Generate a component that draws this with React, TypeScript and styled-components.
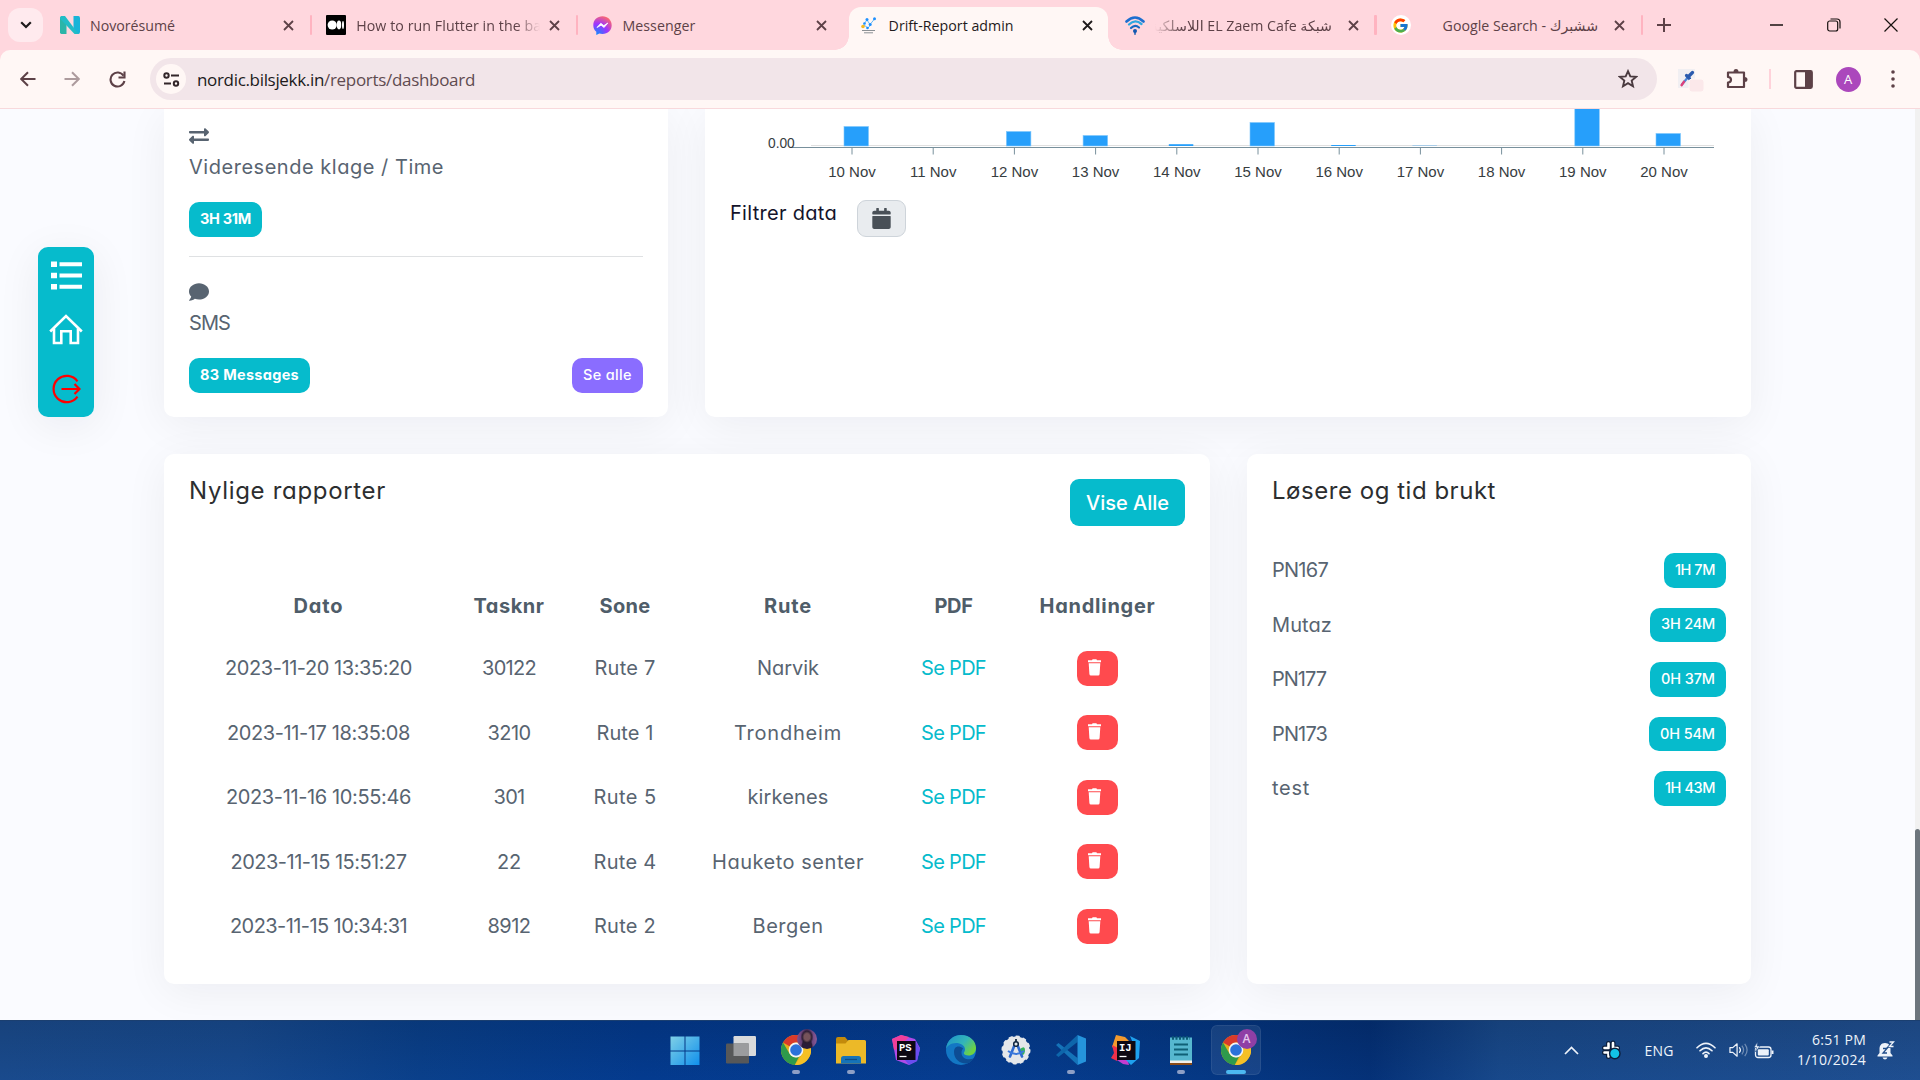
import React, { useLayoutEffect, useRef, useState } from "react";
import styled, { createGlobalStyle, css } from "styled-components";
import { FaExchangeAlt, FaComment, FaCalendar } from "react-icons/fa";
import { FcGoogle } from "react-icons/fc";

const ui = `"Open Sans", "Noto Sans", "DejaVu Sans", sans-serif`;
const body = `Inter, "Open Sans", sans-serif`;
const teal = "#06bbcc";
const ink = "#586471";

const Global = createGlobalStyle`
  *, *::before, *::after { box-sizing: border-box; }
  body { margin: 0; background: #fafbff; overflow: hidden; }
  svg { display: block; flex: none; }
`;

const Screen = styled.div`
  width: 1920px;
  height: 1080px;
  display: flex;
  flex-direction: column;
  overflow: hidden;
  font-family: ${ui};
`;

/* ---------- text that tracks itself to a set width ---------- */

const FitSpan = styled.span`
  display: inline-block;
  white-space: nowrap;
`;

function Fit({ w, children }: { w: number; children: string }) {
  const ref = useRef<HTMLSpanElement>(null);
  const [spacing, setSpacing] = useState(0);
  useLayoutEffect(() => {
    if (!ref.current) return;
    const natural = ref.current.getBoundingClientRect().width;
    setSpacing((w - natural) / children.length);
  }, [w, children]);
  return (
    <FitSpan ref={ref} style={{ letterSpacing: spacing }}>
      {children}
    </FitSpan>
  );
}

/* ---------- browser: tab strip ---------- */

const TabStrip = styled.div`
  height: 50px;
  flex: none;
  display: flex;
  background: #ffd7de;
  color: #5d4147;
`;

const TabSearch = styled.div`
  width: 35px;
  height: 34px;
  margin: 8px 3px 0 8px;
  border-radius: 12px;
  background: #ffeaee;
  color: #1f1a1b;
  display: grid;
  place-items: center;
`;

const Tab = styled.div<{ $active?: boolean; $line?: boolean }>`
  position: relative;
  width: 266.2px;
  height: 50px;
  padding: 0 18px 0 14px;
  display: flex;
  align-items: center;
  ${(p) =>
    p.$line &&
    css`
      &::after {
        content: "";
        position: absolute;
        right: 0;
        top: 15px;
        width: 2.5px;
        height: 20px;
        border-radius: 1px;
        background: #ffb3c0;
      }
    `}
  ${(p) =>
    p.$active &&
    css`
      color: #1f1a1b;
      &::before {
        content: "";
        position: absolute;
        inset: 7px 3px 0 4px;
        border-radius: 12px 12px 0 0;
        background: #fff7f5;
      }
    `}
`;

const Flare = styled.i<{ $right?: boolean }>`
  position: absolute;
  bottom: 0;
  ${(p) => (p.$right ? "right: -11px;" : "left: -10px;")}
  width: 14px;
  height: 14px;
  background: radial-gradient(
    circle at ${(p) => (p.$right ? "100%" : "0")} 0,
    transparent 13.5px,
    #fff7f5 14px
  );
`;

const Favicon = styled.div`
  position: relative;
  width: 20px;
  height: 20px;
  flex: none;
  display: grid;
  place-items: center;
`;

const TabTitle = styled.div<{ $fade?: "left" | "right"; $rtl?: boolean }>`
  position: relative;
  flex: 1;
  margin: 1px ${(p) => (p.$rtl ? 16 : 9)}px 0 10px;
  overflow: hidden;
  white-space: nowrap;
  font-size: 14.2px;
  line-height: 26px;
  letter-spacing: ${(p) => (p.$rtl ? 0 : -0.12)}px;
  ${(p) =>
    p.$fade === "right" &&
    "mask-image: linear-gradient(to left, transparent, #000 24px);"}
  ${(p) =>
    p.$fade === "left" &&
    "mask-image: linear-gradient(to right, transparent, #000 28px);"}
`;

const TabClose = styled.div`
  position: relative;
  width: 11px;
  height: 11px;
`;

const NewTab = styled.div`
  width: 42px;
  height: 50px;
  display: grid;
  place-items: center;
`;

const WindowButtons = styled.div`
  flex: 1;
  padding-right: 1px;
  display: flex;
  justify-content: flex-end;
  color: #17110f;
`;

const WindowButton = styled.div`
  width: 57px;
  height: 49px;
  display: grid;
  place-items: center;
`;

/* ---------- browser: toolbar ---------- */

const ToolbarBack = styled.div`
  flex: none;
  background: #ffd7de;
`;

const Toolbar = styled.div`
  height: 59px;
  display: flex;
  align-items: center;
  padding: 0 0 0 6px;
  background: #fff7f5;
  border-bottom: 1px solid #f8d9dc;
  border-radius: 10px 10px 0 0;
  color: #5d4147;
`;

const ToolButton = styled.div<{ $w?: number; $dim?: boolean }>`
  width: ${(p) => p.$w ?? 44}px;
  height: 42px;
  flex: none;
  display: grid;
  place-items: center;
  opacity: ${(p) => (p.$dim ? 0.5 : 1)};
`;

const Omnibox = styled.div`
  width: 1507px;
  height: 42px;
  flex: none;
  margin-left: 9px;
  padding: 0 19px 0 6px;
  display: flex;
  align-items: center;
  border-radius: 21px;
  background: #f2e5e9;
`;

const SiteInfo = styled.div`
  width: 30px;
  height: 30px;
  border-radius: 50%;
  background: #fff7f5;
  color: #33262a;
  display: grid;
  place-items: center;
`;

const Url = styled.div`
  flex: 1;
  margin-left: 11px;
  padding-top: 1px;
  font-size: 17px;
  line-height: 30px;
  color: #5f4b50;
  b {
    font-weight: 400;
    color: #201a1b;
  }
`;

const ToolDivider = styled.div`
  width: 2px;
  height: 20px;
  background: #ffd2da;
`;

const Avatar = styled.div`
  width: 25px;
  height: 25px;
  border-radius: 50%;
  background: #ab47bc;
  color: #fff;
  font-size: 13px;
  line-height: 25px;
  text-align: center;
`;

/* ---------- page ---------- */

const Page = styled.div`
  height: 911px;
  flex: none;
  display: flex;
  overflow: hidden;
  background: #fafbff;
  font-family: ${body};
  font-feature-settings: "cv11";
  font-size: 20px;
  line-height: 30px;
  color: ${ink};
`;

const SideColumn = styled.div`
  width: 164px;
  flex: none;
  padding: 138px 0 0 38px;
`;

const SideMenu = styled.nav`
  width: 56px;
  height: 170px;
  padding: 14px 0 13px;
  display: flex;
  flex-direction: column;
  align-items: center;
  gap: 24px;
  border-radius: 10px;
  background: ${teal};
  box-shadow: 0 8px 44px rgba(8, 10, 40, 0.07);
  svg:last-child {
    margin-top: 5px;
  }
`;

const Main = styled.main`
  width: 1587px;
  display: flex;
  flex-direction: column;
  gap: 37px;
`;

const CardRow = styled.div<{ $cols: string; $h: number }>`
  display: grid;
  grid-template-columns: ${(p) => p.$cols};
  gap: 37px;
  height: ${(p) => p.$h}px;
`;

const Card = styled.section<{ $clipped?: boolean }>`
  padding: ${(p) => (p.$clipped ? "0 25px" : "25px 25px 0")};
  border-radius: ${(p) => (p.$clipped ? "0 0 10px 10px" : "10px")};
  background: #fff;
  box-shadow: 0 8px 44px rgba(8, 10, 40, 0.06);
`;

const StatIcon = styled.div<{ $top: number }>`
  padding-top: ${(p) => p.$top}px;
  height: ${(p) => p.$top + 26}px;
`;

const StatName = styled.div`
  height: 30px;
`;

const StatFoot = styled.div`
  height: 34.5px;
  margin-top: 20px;
  display: flex;
  justify-content: space-between;
`;

const Badge = styled.span<{ $color?: string; $bold?: boolean }>`
  height: 34.5px;
  padding: 0 11px 1px;
  display: inline-flex;
  align-items: center;
  border-radius: 10px;
  background: ${(p) => p.$color ?? teal};
  color: #fff;
  font-size: 14.5px;
  font-weight: ${(p) => (p.$bold ? 700 : 500)};
`;

const Rule = styled.hr`
  margin: 19.5px 0 0;
  border: 0;
  border-top: 1px solid #dfe1e3;
`;

const ChartArea = styled.div`
  height: 91px;
  margin: 0 -25px;
  svg text {
    font-family: "Liberation Sans", Arial, sans-serif;
    fill: #373d3f;
  }
`;

const FilterRow = styled.div`
  display: flex;
  align-items: flex-start;
  gap: 20px;
  color: #14142b;
`;

const FilterLabel = styled.div`
  margin-top: -2px;
`;

const DateButton = styled.button`
  width: 49px;
  height: 37px;
  padding: 0;
  display: grid;
  place-items: center;
  border: 1px solid #ced4da;
  border-radius: 9px;
  background: #e9ecef;
  color: #495057;
`;

const CardHead = styled.header<{ $h: number }>`
  height: ${(p) => p.$h}px;
  display: flex;
  justify-content: space-between;
  align-items: flex-start;
`;

const Title = styled.h2`
  margin: -3px 0 0;
  font-size: 24px;
  font-weight: 400;
  line-height: 30px;
  color: #2c2e30;
`;

const PrimaryButton = styled.button`
  height: 47px;
  width: 115px;
  padding: 0;
  border: 0;
  border-radius: 9px;
  background: ${teal};
  color: #fff;
  font: 500 20px ${body};
  font-feature-settings: "cv11";
`;

const TableRow = styled.div<{ $head?: boolean }>`
  display: grid;
  grid-template-columns: 259px 122px 110px 216px 115px 173px;
  height: 64.5px;
  align-items: center;
  justify-items: center;
  ${(p) =>
    p.$head &&
    css`
      height: 60px;
      font-weight: 700;
      color: #4f5d69;
    `}
`;

const PdfLink = styled.span`
  color: ${teal};
`;

const DeleteButton = styled.button`
  width: 41px;
  height: 35px;
  padding: 0 6px 2px 0;
  display: grid;
  place-items: center;
  border: 0;
  border-radius: 10px;
  background: #ff4a4e;
`;

const SolverRow = styled.div`
  height: 54.6px;
  display: flex;
  justify-content: space-between;
  align-items: flex-start;
`;

const SolverName = styled.div`
  padding-top: 2px;
`;

const ScrollSide = styled.div`
  margin-left: auto;
  width: 5px;
  display: flex;
  align-items: flex-end;
  background: #f1f1f1;
`;

const ScrollThumb = styled.div`
  width: 5px;
  height: 191px;
  border-radius: 3px 3px 0 0;
  background: #6c757d;
`;

/* ---------- taskbar ---------- */

const Taskbar = styled.footer`
  height: 60px;
  flex: none;
  display: flex;
  border-top: 1px solid #1b3f70;
  background: linear-gradient(rgba(0, 20, 60, 0.16), rgba(10, 70, 170, 0.14)),
    linear-gradient(
      90deg,
      #1c4b88 0,
      #194a8a 240px,
      #0a3f86 420px,
      #03398a 640px,
      #053b8c 960px,
      #04367f 1200px,
      #042e70 1370px,
      #1a4986 1500px,
      #22508d 1920px
    );
  color: #eef3fa;
`;

const Apps = styled.div`
  margin-left: 658px;
  display: flex;
`;

const AppSlot = styled.div`
  width: 55px;
  height: 59px;
  padding-top: 4px;
`;

const AppTile = styled.div<{ $active?: boolean }>`
  position: relative;
  width: 50px;
  height: 50px;
  margin: 0 auto;
  padding-top: 10px;
  display: flex;
  flex-direction: column;
  align-items: center;
  border-radius: 6px;
  ${(p) =>
    p.$active &&
    "background: rgba(255,255,255,.08); box-shadow: inset 0 0 0 1px rgba(255,255,255,.07);"}
`;

const RunMark = styled.i<{ $active?: boolean }>`
  width: ${(p) => (p.$active ? 20 : 8)}px;
  height: 4px;
  margin-top: 5px;
  border-radius: 2px;
  background: ${(p) => (p.$active ? "#4cb8f0" : "#8d9fc6")};
`;

const Profile = styled.span<{ $photo?: boolean }>`
  position: absolute;
  left: 26px;
  top: 4px;
  width: 20px;
  height: 20px;
  border-radius: 50%;
  background: ${(p) =>
    p.$photo
      ? "radial-gradient(ellipse at 50% 40%, #76535a 0 20%, rgba(42,28,48,.9) 34%, transparent 46%), radial-gradient(ellipse at 50% 100%, #2a1c38 0 36%, transparent 44%), linear-gradient(90deg, #80508e, #4a3060 50%, #8d5c9a)"
      : "#8f3fa5"};
  color: #e5c6ec;
  font: 600 12px/20px ${ui};
  text-align: center;
`;

const Tray = styled.div`
  margin-left: auto;
  width: 365px;
  padding-bottom: 1px;
  display: flex;
  align-items: center;
  font-size: 14px;
`;

const TrayItem = styled.div<{ $w: number }>`
  width: ${(p) => p.$w}px;
  flex: none;
  display: grid;
  place-items: center;
`;

const Clock = styled.div`
  width: 80px;
  text-align: right;
  line-height: 20px;
  font-size: 14px;
`;

/* ---------- small icons ---------- */

const Cross = () => (
  <svg width="11" height="11" viewBox="0 0 11 11" stroke="currentColor" strokeWidth="1.8">
    <path d="M1 1l9 9M10 1l-9 9" />
  </svg>
);

const NovoIcon = () => (
  <svg width="20" height="18" viewBox="0 0 20 18">
    <path d="M0 2.2Q0 .3 1.8.3H3L6.500 3v15H1.500Q0 18 0 16.300z" fill="#2bb5a8" />
    <path d="M20 2Q20 0 18.300 0H13.500v15l3.500 3h1.300Q20 18 20 16z" fill="#19b4d8" />
    <path d="M1.300 0H5L18.500 18H14.500L0 2.500Q0 .5 1.300 0z" fill="#22bcc6" />
  </svg>
);

const MediumIcon = () => (
  <svg width="20" height="20" viewBox="0 0 20 20">
    <rect width="20" height="20" rx="1" fill="#000" />
    <circle cx="6.200" cy="10" r="4.600" fill="#fff" />
    <ellipse cx="13" cy="10" rx="2.200" ry="4.400" fill="#fff" />
    <ellipse cx="17" cy="10" rx="1" ry="4" fill="#fff" />
  </svg>
);

const MessengerIcon = () => (
  <svg width="19" height="19" viewBox="0 0 19 19">
    <defs>
      <radialGradient id="msg" cx=".2" cy="1" r="1.100">
        <stop offset="0" stopColor="#0a8dff" />
        <stop offset=".55" stopColor="#a033ff" />
        <stop offset="1" stopColor="#ff6a6a" />
      </radialGradient>
    </defs>
    <path d="M9.500.3C4.200.3.3 4 .3 9.200c0 2.700 1.100 5 3 6.600V19l3-1.500c1 .3 2 .4 3.200.4 5.300 0 9.200-3.700 9.200-8.700S14.800.3 9.500.3z" fill="url(#msg)" />
    <path d="M4 11.500l3.800-4.200 3 2.300 4-2.600-3.700 4.500-3-2.300z" fill="#fff" stroke="#fff" strokeWidth=".8" strokeLinejoin="round" />
  </svg>
);

const DriftIcon = () => (
  <svg width="15" height="17" viewBox="0 0 15 17">
    <path d="M2.500 7.500L6 3l3 4.500L13.500 2M3 8l4 3 2.500-3" stroke="#64b9f5" strokeWidth="1" fill="none" />
    <g fill="#1e90ff">
      <circle cx="6" cy="2.500" r="1.500" /><circle cx="9.200" cy="7.500" r="1.500" /><circle cx="13.500" cy="1.800" r="1.500" />
      <circle cx="3.500" cy="6.500" r="1.300" /><circle cx="6.500" cy="11" r="1.300" />
    </g>
    <circle cx="2" cy="9.500" r="1.800" fill="#f5b921" />
    <path d="M1 13.500h13M3 15.800h9" stroke="#8b9094" strokeWidth="1" />
  </svg>
);

const WifiFav = () => (
  <svg width="20" height="19" viewBox="0 0 20 19" fill="none" strokeLinecap="round">
    <path d="M1.500 5.500Q10-2.500 18.500 5.500" stroke="#1d6fd0" strokeWidth="2.600" />
    <path d="M4 8.500Q10 2.500 16.500 8" stroke="#2fa8e0" strokeWidth="2.300" />
    <path d="M6 12Q10 8 14 11.500" stroke="#1669c2" strokeWidth="2.200" />
    <circle cx="10" cy="15" r="2" fill="#1458b0" /><path d="M10 16v2.200" stroke="#1458b0" strokeWidth="1.500" />
  </svg>
);

const GoogleFav = styled.div`
  width: 20px;
  height: 20px;
  border-radius: 50%;
  background: #fff;
  display: grid;
  place-items: center;
`;

const ListIcon = () => (
  <svg width="31" height="29" viewBox="0 0 31 29" fill="#fff">
    <path d="M0 .5h6v5.500H0zM0 11.800h6v5.500H0zM0 23h6v5.500H0zM8.500 1.200H31v4H8.500zM8.500 12.500H31v4H8.500zM8.500 23.700H31v4H8.500z" />
  </svg>
);

const HomeIcon = () => (
  <svg width="34" height="31" viewBox="0 0 34 31" fill="none" stroke="#fff" strokeWidth="2.600" strokeLinejoin="miter">
    <path d="M1.200 17.500L17 2l15.800 15.500" />
    <path d="M5 14.500V29h7.300V17.200h9.400V29H29V14.500" />
  </svg>
);

const LogoutIcon = () => (
  <svg width="30" height="30" viewBox="0 0 30 30" fill="none" stroke="#f00" strokeWidth="2.200">
    <path d="M26.500 7.300A13.200 13.200 0 1 0 26.500 22.700" />
    <path d="M10.500 15H28M23.500 10l5 5-5 5" />
  </svg>
);

const TrashIcon = () => (
  <svg width="15" height="17" viewBox="0 0 15 17" fill="#fff">
    <path d="M5 1.200L5.600.3h3.800l.6.900h4v2H1v-2zM1.700 4.300h11.600l-.7 10.700q-.1 1.500-1.500 1.500H3.900q-1.400 0-1.500-1.500z" />
  </svg>
);

/* ---------- taskbar icons ---------- */

const WindowsIcon = () => (
  <svg width="32" height="30" viewBox="0 0 32 30">
    <defs>
      <linearGradient id="win" x1="0" y1="0" x2="1" y2="1">
        <stop offset="0" stopColor="#7fd0e6" /><stop offset="1" stopColor="#0f8fec" />
      </linearGradient>
    </defs>
    <path d="M.5 1.500h14v14H.5zM15.500 1.500h14v14h-14zM.5 16.500h14v14H.5zM15.500 16.500h14v14h-14z" fill="url(#win)" />
  </svg>
);

const TaskViewIcon = () => (
  <svg width="30" height="30" viewBox="0 0 30 30">
    <rect x="7.500" y="1" width="22.500" height="20" rx="1.200" fill="#d9dadb" />
    <rect x="0" y="8.500" width="23" height="20" rx="1.200" fill="#575859" />
    <path d="M7.500 8.500H23V21H7.500z" fill="#9b9c9e" />
  </svg>
);

const ChromeIcon = () => (
  <svg width="30" height="30" viewBox="0 0 30 30">
    <circle cx="15" cy="15" r="15" fill="#e2b01c" />
    <path d="M2 7.500A15 15 0 0 1 28 7.500H15a7.500 7.500 0 0 0-6.500 3.800z" fill="#d93a2b" />
    <path d="M2 7.500L8.500 18.700A7.500 7.500 0 0 0 18 21.800L13.700 30A15 15 0 0 1 2 7.500z" fill="#2e9a4c" />
    <path d="M28 7.500A15 15 0 0 1 14 30L21.500 18.700A7.500 7.500 0 0 0 15 7.500z" fill="#f5c026" />
    <circle cx="15" cy="15" r="7.400" fill="#f3f4f6" />
    <circle cx="15" cy="15" r="5.800" fill="#2c72da" />
  </svg>
);

const FolderIcon = () => (
  <svg width="30" height="30" viewBox="0 0 30 30">
    <path d="M0 4q0-2 2-2h7l3 3.500V10H0z" fill="#c38a0b" />
    <path d="M0 8.500h9.500l3-3.500H28.500q1.500 0 1.500 1.500V28.500H0z" fill="#ecb928" />
    <path d="M5 28.500v-5q0-2.500 2.500-2.500h15q2.500 0 2.500 2.500v5z" fill="#1673b8" />
    <path d="M9 24.500h12" stroke="#0c4c86" strokeWidth="1.200" />
  </svg>
);

const JetBrainsIcon = ({ label, shapes }: { label: string; shapes: [string, string][] }) => (
  <svg width="30" height="30" viewBox="0 0 30 30">
    {shapes.map(([d, fill]) => (
      <path key={d} d={d} fill={fill} />
    ))}
    <rect x="6" y="6" width="18.500" height="19" fill="#0d0813" />
    <text x="8" y="15.500" fill="#fff" fontFamily="Liberation Mono, monospace" fontWeight="700" fontSize="10.500">
      {label}
    </text>
    <path d="M8.500 21.500h7" stroke="#fff" strokeWidth="1.300" />
  </svg>
);

const EdgeIcon = () => (
  <svg width="30" height="30" viewBox="0 0 30 30">
    <defs>
      <linearGradient id="edgeTop" x1="0" y1="0" x2="1" y2=".6">
        <stop offset="0" stopColor="#1d90cc" /><stop offset=".6" stopColor="#33b5b8" /><stop offset="1" stopColor="#6fd23f" />
      </linearGradient>
    </defs>
    <circle cx="15" cy="15" r="15" fill="#1377c4" />
    <path d="M8 17c0 8 7 12 13 11.500 3-.6 5.500-3 6.500-5-5 2-12 .5-12-6 0-2 .8-3 1.700-4C12 9.500 8 12 8 17z" fill="#0d4d94" />
    <path d="M0 14C1 5 7.500 0 15 0c9 0 15 6 15 13 0 5-3.500 7.500-7.500 7.500-3.200 0-4.700-1.300-4.700-2.300s1.200-1.500 1.200-3.700C19 10.500 14.500 8 10 8 5 8 1 11 0 14z" fill="url(#edgeTop)" />
  </svg>
);

const StudioIcon = () => (
  <svg width="30" height="30" viewBox="0 0 30 30">
    <circle cx="15" cy="15" r="13.500" fill="#e4e7ea" />
    <circle cx="15" cy="15" r="13.500" fill="none" stroke="#e4e7ea" strokeWidth="2" strokeLinecap="round" strokeDasharray="2.500 4.570" />
    <path d="M19 14q5-4 5 1t-3 5z" fill="#35b35d" />
    <path d="M14 9L9 21.500M16 9l5 12.500" stroke="#2f6bd0" strokeWidth="2.600" strokeLinecap="round" />
    <path d="M7 16q8 6 16 0" stroke="#3a78dc" strokeWidth="2" fill="none" />
    <circle cx="15" cy="9" r="2.300" fill="#dfe5ea" stroke="#10263f" strokeWidth="1.500" />
    <path d="M15 4v3" stroke="#10263f" strokeWidth="1.800" />
  </svg>
);

const CodeIcon = () => (
  <svg width="30" height="30" viewBox="0 0 30 30">
    <path d="M0 10l2.500-2 19 15V30z" fill="#1573b8" />
    <path d="M0 20l2.500 2 19-15V0z" fill="#0e66ab" />
    <path d="M21.500 0L30 3.500v23L21.500 30z" fill="#2594dc" />
  </svg>
);

const NotepadIcon = () => (
  <svg width="24" height="30" viewBox="0 0 24 30">
    <rect x="1" y="2.500" width="22" height="25" fill="#56b7cf" />
    <path d="M1 25.500h22v2.500H1z" fill="#f3efe9" /><path d="M1 28h22v2H1z" fill="#8a4b17" />
    <path d="M3 3h18" stroke="#0d5a76" strokeWidth="3.500" strokeDasharray="2 1.500" />
    <path d="M5 9.500h14M5 14.500h14M5 19.500h14" stroke="#0f6076" strokeWidth="1.800" />
  </svg>
);

/* ---------- data ---------- */

const days = [
  { d: "10 Nov", h: 19.5 },
  { d: "11 Nov", h: 0 },
  { d: "12 Nov", h: 14.5 },
  { d: "13 Nov", h: 10.5, dx: -4.5 },
  { d: "14 Nov", h: 1.8 },
  { d: "15 Nov", h: 23.5 },
  { d: "16 Nov", h: 1 },
  { d: "17 Nov", h: 0.3 },
  { d: "18 Nov", h: 0 },
  { d: "19 Nov", h: 60 },
  { d: "20 Nov", h: 12.5 },
];

const heads: [string, number][] = [
  ["Dato", 50], ["Tasknr", 71], ["Sone", 51], ["Rute", 48], ["PDF", 38], ["Handlinger", 116],
];

type Cell = [string, number];
const reports: { date: Cell; task: Cell; zone: Cell; route: Cell }[] = [
  { date: ["2023-11-20 13:35:20", 187], task: ["30122", 54], zone: ["Rute 7", 61], route: ["Narvik", 62] },
  { date: ["2023-11-17 18:35:08", 183], task: ["3210", 43], zone: ["Rute 1", 57], route: ["Trondheim", 108] },
  { date: ["2023-11-16 10:55:46", 185], task: ["301", 31], zone: ["Rute 5", 63], route: ["kirkenes", 81] },
  { date: ["2023-11-15 15:51:27", 176], task: ["22", 24], zone: ["Rute 4", 63], route: ["Hauketo senter", 152] },
  { date: ["2023-11-15 10:34:31", 177], task: ["8912", 43], zone: ["Rute 2", 62], route: ["Bergen", 71] },
];

const solvers: { name: Cell; time: Cell }[] = [
  { name: ["PN167", 56], time: ["1H 7M", 40] },
  { name: ["Mutaz", 60], time: ["3H 24M", 54] },
  { name: ["PN177", 54], time: ["0H 37M", 54] },
  { name: ["PN173", 55], time: ["0H 54M", 55] },
  { name: ["test", 38], time: ["1H 43M", 50] },
];

function Chart() {
  return (
    <svg width="1046" height="91" viewBox="0 0 1046 91">
      <path d="M106 36.500H1009" stroke="#e0e0e0" />
      {days.map(({ d, h, dx = 0 }, i) => {
        const x = 147 + i * 81.2;
        return (
          <g key={d}>
            {h > 0 && (
              <rect x={x - 8 + dx} y={37 - h} width="24.500" height={h} fill="#269ffb" stroke="#7fc6fc" strokeWidth={h > 3 ? 0.6 : 0} />
            )}
            <path d={`M${x} 38v7.500`} stroke="#78909c" />
            <text x={x} y="68" textAnchor="middle" fontSize="15">{d}</text>
          </g>
        );
      })}
      <path d="M87 38.500H1009" stroke="#78909c" strokeWidth="1.200" />
      <text x="63" y="39" fontSize="13.750">0.00</text>
    </svg>
  );
}

function App() {
  return (
    <Screen>
      <Global />
      <TabStrip>
        <TabSearch>
          <svg width="12" height="8" viewBox="0 0 12 8" fill="none" stroke="currentColor" strokeWidth="2.200"><path d="M1.200 1.200L6 6l4.800-4.800" /></svg>
        </TabSearch>
        <Tab $line>
          <Favicon><NovoIcon /></Favicon>
          <TabTitle><Fit w={85}>Novorésumé</Fit></TabTitle>
          <TabClose><Cross /></TabClose>
        </Tab>
        <Tab $line>
          <Favicon><MediumIcon /></Favicon>
          <TabTitle $fade="right"><Fit w={248}>How to run Flutter in the background</Fit></TabTitle>
          <TabClose><Cross /></TabClose>
        </Tab>
        <Tab>
          <Favicon><MessengerIcon /></Favicon>
          <TabTitle><Fit w={73}>Messenger</Fit></TabTitle>
          <TabClose><Cross /></TabClose>
        </Tab>
        <Tab $active>
          <Flare /><Flare $right />
          <Favicon><DriftIcon /></Favicon>
          <TabTitle><Fit w={125}>Drift-Report admin</Fit></TabTitle>
          <TabClose><Cross /></TabClose>
        </Tab>
        <Tab $line>
          <Favicon><WifiFav /></Favicon>
          <TabTitle $fade="left" $rtl dir="rtl">شبكة EL Zaem Cafe اللاسلكية للانترنت</TabTitle>
          <TabClose><Cross /></TabClose>
        </Tab>
        <Tab $line>
          <Favicon><GoogleFav><FcGoogle size={17} /></GoogleFav></Favicon>
          <TabTitle $rtl dir="rtl">ششبرك - Google Search</TabTitle>
          <TabClose><Cross /></TabClose>
        </Tab>
        <NewTab>
          <svg width="14" height="14" viewBox="0 0 14 14" stroke="currentColor" strokeWidth="2"><path d="M7 0v14M0 7h14" /></svg>
        </NewTab>
        <WindowButtons>
          <WindowButton><svg width="13" height="2"><path d="M0 1h13" stroke="currentColor" strokeWidth="1.500" /></svg></WindowButton>
          <WindowButton>
            <svg width="14" height="14" viewBox="0 0 14 14" fill="none" stroke="currentColor" strokeWidth="1.200">
              <rect x=".7" y="3" width="10" height="10" rx="2" /><path d="M3.500 1h6.500q3 0 3 3v6.500" />
            </svg>
          </WindowButton>
          <WindowButton>
            <svg width="14" height="14" viewBox="0 0 14 14" stroke="currentColor" strokeWidth="1.200"><path d="M.5.5l13 13M13.500.5l-13 13" /></svg>
          </WindowButton>
        </WindowButtons>
      </TabStrip>

      <ToolbarBack>
        <Toolbar>
          <ToolButton>
            <svg width="16" height="16" viewBox="0 0 16 16" fill="none" stroke="currentColor" strokeWidth="2"><path d="M15.500 8H1.500M8 1.200L1.200 8 8 14.800" /></svg>
          </ToolButton>
          <ToolButton $dim>
            <svg width="16" height="16" viewBox="0 0 16 16" fill="none" stroke="currentColor" strokeWidth="2"><path d="M.5 8h14M8 1.200L14.800 8 8 14.800" /></svg>
          </ToolButton>
          <ToolButton $w={47}>
            <svg width="17" height="17" viewBox="0 0 17 17" fill="none" stroke="currentColor" strokeWidth="2.100">
              <path d="M14.500 4.800A7 7 0 1 0 15.400 10" /><path d="M15.500.5v6h-6" />
            </svg>
          </ToolButton>
          <Omnibox>
            <SiteInfo>
              <svg width="17" height="15" viewBox="0 0 17 15" fill="none" stroke="currentColor" strokeWidth="2">
                <circle cx="3.500" cy="3.500" r="2.200" /><path d="M8 3.500h8M1 11.500h7" /><circle cx="13" cy="11.500" r="2.200" />
              </svg>
            </SiteInfo>
            <Url><b><Fit w={127}>nordic.bilsjekk.in</Fit></b><Fit w={151}>/reports/dashboard</Fit></Url>
            <svg width="20" height="20" viewBox="0 0 20 20" fill="none" stroke="#4a3a3f" strokeWidth="1.900">
              <path d="M10 2.200l2.300 5.200 5.700.5-4.300 3.700 1.300 5.600-5-3-5 3 1.300-5.600L2 7.900l5.700-.5z" />
            </svg>
          </Omnibox>
          <ToolButton $w={68}>
            <svg width="28" height="28" viewBox="0 0 28 28">
              <rect x="1" y="4" width="17" height="19" fill="#f1eff2" />
              <path d="M4.500 20L12 11" stroke="#4a86d8" strokeWidth="2.200" /><path d="M4 21l3.500-5" stroke="#e0407a" strokeWidth="2.200" />
              <path d="M9.500 10.500l3 3M11.500 11.500L15.500 7.500" stroke="#2a5aae" strokeWidth="3.200" strokeLinecap="round" />
              <rect x="12" y="14" width="15" height="13" rx="3" fill="#fbe8ea" stroke="#fff7f5" />
            </svg>
          </ToolButton>
          <ToolButton $w={24}>
            <svg width="22" height="22" viewBox="0 0 22 22" fill="none" stroke="currentColor" strokeWidth="2.200" strokeLinejoin="round">
              <path d="M2 4.500h16v14.500H2v-4.500q3-.3 3-2.800T2 9z" />
              <path d="M7.500 4Q7.500 1 10 1t2.500 3zM18.500 9Q21.500 9 21.500 11.500t-3 2.500z" fill="currentColor" stroke="none" />
            </svg>
          </ToolButton>
          <ToolButton $w={42}><ToolDivider /></ToolButton>
          <ToolButton $w={24}>
            <svg width="19" height="19" viewBox="0 0 19 19"><rect x="1.200" y="1.200" width="16.600" height="16.600" rx="1.200" fill="none" stroke="currentColor" strokeWidth="2.200" /><path d="M11 1h7v17h-7z" fill="currentColor" /></svg>
          </ToolButton>
          <ToolButton $w={66}><Avatar>A</Avatar></ToolButton>
          <ToolButton $w={23}>
            <svg width="4" height="18" viewBox="0 0 4 18" fill="currentColor"><circle cx="2" cy="2" r="1.800" /><circle cx="2" cy="9" r="1.800" /><circle cx="2" cy="16" r="1.800" /></svg>
          </ToolButton>
        </Toolbar>
      </ToolbarBack>

      <Page>
        <SideColumn>
          <SideMenu><ListIcon /><HomeIcon /><LogoutIcon /></SideMenu>
        </SideColumn>
        <Main>
          <CardRow $cols="504px 1046px" $h={308}>
            <Card $clipped>
              <StatIcon $top={17}><FaExchangeAlt size={20} /></StatIcon>
              <StatName><Fit w={255}>Videresende klage / Time</Fit></StatName>
              <StatFoot><Badge $bold><Fit w={51}>3H 31M</Fit></Badge></StatFoot>
              <Rule />
              <StatIcon $top={25}><FaComment size={20} /></StatIcon>
              <StatName><Fit w={41}>SMS</Fit></StatName>
              <StatFoot>
                <Badge $bold><Fit w={99}>83 Messages</Fit></Badge>
                <Badge $color="#8a6dff"><Fit w={49}>Se alle</Fit></Badge>
              </StatFoot>
            </Card>
            <Card $clipped>
              <ChartArea><Chart /></ChartArea>
              <FilterRow>
                <FilterLabel><Fit w={107}>Filtrer data</Fit></FilterLabel>
                <DateButton><FaCalendar size={21} /></DateButton>
              </FilterRow>
            </Card>
          </CardRow>
          <CardRow $cols="1046px 504px" $h={529.5}>
            <Card>
              <CardHead $h={97}>
                <Title><Fit w={197}>Nylige rapporter</Fit></Title>
                <PrimaryButton><Fit w={83}>Vise Alle</Fit></PrimaryButton>
              </CardHead>
              <TableRow $head>
                {heads.map(([t, w]) => <Fit key={t} w={w}>{t}</Fit>)}
              </TableRow>
              {reports.map((r) => (
                <TableRow key={r.date[0]}>
                  <Fit w={r.date[1]}>{r.date[0]}</Fit>
                  <Fit w={r.task[1]}>{r.task[0]}</Fit>
                  <Fit w={r.zone[1]}>{r.zone[0]}</Fit>
                  <Fit w={r.route[1]}>{r.route[0]}</Fit>
                  <PdfLink><Fit w={65}>Se PDF</Fit></PdfLink>
                  <DeleteButton><TrashIcon /></DeleteButton>
                </TableRow>
              ))}
            </Card>
            <Card>
              <CardHead $h={74}><Title><Fit w={224}>Løsere og tid brukt</Fit></Title></CardHead>
              {solvers.map((s) => (
                <SolverRow key={s.name[0]}>
                  <SolverName><Fit w={s.name[1]}>{s.name[0]}</Fit></SolverName>
                  <Badge><Fit w={s.time[1]}>{s.time[0]}</Fit></Badge>
                </SolverRow>
              ))}
            </Card>
          </CardRow>
        </Main>
        <ScrollSide><ScrollThumb /></ScrollSide>
      </Page>

      <Taskbar>
        <Apps>
          <AppSlot><AppTile><WindowsIcon /></AppTile></AppSlot>
          <AppSlot><AppTile><TaskViewIcon /></AppTile></AppSlot>
          <AppSlot><AppTile><ChromeIcon /><Profile $photo /><RunMark /></AppTile></AppSlot>
          <AppSlot><AppTile><FolderIcon /><RunMark /></AppTile></AppSlot>
          <AppSlot>
            <AppTile>
              <JetBrainsIcon label="PS" shapes={[["M1 4l9-4 14 4 5 9-3 13-8 4-13-5L3 14z", "#b04be8"], ["M1 4l9-4 8 2-12 12-3 1z", "#f0409a"], ["M24 5l5 9-3 12-8 4-4-5 10-2z", "#6a4df0"]]} />
            </AppTile>
          </AppSlot>
          <AppSlot><AppTile><EdgeIcon /></AppTile></AppSlot>
          <AppSlot><AppTile><StudioIcon /></AppTile></AppSlot>
          <AppSlot><AppTile><CodeIcon /><RunMark /></AppTile></AppSlot>
          <AppSlot>
            <AppTile>
              <JetBrainsIcon label="IJ" shapes={[["M5 0l9 2 4 4-8 10L1 12z", "#f29a2e"], ["M1 10l8 4-3 12-6-3 3-5z", "#f0304a"], ["M6 25l10-3 2 8-6-1z", "#c53cd0"], ["M19 1l10 5-1 17-8 7-5-5 9-12z", "#1ea0ee"]]} />
            </AppTile>
          </AppSlot>
          <AppSlot><AppTile><NotepadIcon /><RunMark /></AppTile></AppSlot>
          <AppSlot><AppTile $active><ChromeIcon /><Profile>A</Profile><RunMark $active /></AppTile></AppSlot>
        </Apps>
        <Tray>
          <TrayItem $w={32}>
            <svg width="15" height="9" viewBox="0 0 15 9" fill="none" stroke="currentColor" strokeWidth="1.700"><path d="M1 8l6.500-6.500L14 8" /></svg>
          </TrayItem>
          <TrayItem $w={48}>
            <svg width="20" height="20" viewBox="0 0 20 20" strokeLinecap="round">
              <path d="M7.500 3.500v4M12 3v4.500M3.500 8h4M12 8h4.500M3.500 12.500h4M7.500 12.500v4" stroke="#0c1f3c" strokeWidth="5" />
              <path d="M7.500 3.500v4M12 3v4.500M3.500 8h4M12 8h4.500M3.500 12.500h4M7.500 12.500v4" stroke="#fff" strokeWidth="2.600" />
              <circle cx="13.800" cy="13.500" r="5.200" fill="#12c3e6" stroke="#0c1f3c" strokeWidth="1.400" />
            </svg>
          </TrayItem>
          <TrayItem $w={48}><Fit w={29}>ENG</Fit></TrayItem>
          <TrayItem $w={46}>
            <svg width="20" height="16" viewBox="0 0 20 16" fill="none" stroke="currentColor" strokeWidth="1.600" strokeLinecap="round">
              <path d="M1 5.800Q10-3.200 19 5.800M4 8.800Q10 2.800 16 8.800M7 11.600Q10 8.600 13 11.600" /><circle cx="10" cy="14" r="1.200" fill="currentColor" />
            </svg>
          </TrayItem>
          <TrayItem $w={12}>
            <svg width="20" height="16" viewBox="0 0 21 16" fill="none" stroke="currentColor" strokeWidth="1.300" strokeLinejoin="round">
              <path d="M1 5.500h3L8.500 1.500v13L4 10.500H1z" /><path d="M11 5.500q2 2.500 0 5" strokeLinecap="round" /><path d="M13.500 3.500q3.600 4.500 0 9M16.500 1.500q5 6.500 0 13" opacity=".4" />
            </svg>
          </TrayItem>
          <TrayItem $w={45}>
            <svg width="21" height="17" viewBox="0 0 21 17">
              <rect x="2.500" y="5" width="15.500" height="10.500" rx="2.500" fill="none" stroke="currentColor" strokeWidth="1.300" />
              <rect x="4.800" y="7.200" width="11" height="6.200" rx="1" fill="currentColor" /><path d="M18.500 8.500h2v3.500h-2z" fill="currentColor" />
              <path d="M4.500 0L1 5.500h2.500L2.500 10 7 4H4.200z" fill="currentColor" stroke="#204d8a" strokeWidth=".6" />
            </svg>
          </TrayItem>
          <Clock><Fit w={54}>6:51 PM</Fit><br /><Fit w={69}>1/10/2024</Fit></Clock>
          <TrayItem $w={39}>
            <svg width="18" height="19" viewBox="0 0 18 19">
              <path d="M8 2C4 2 2.500 5 2.500 8v4L.5 14.500v1h15v-1L13.500 12V8C13.500 5 12 2 8 2zM5.500 16.500h5q-.8 2-2.500 2t-2.500-2z" fill="currentColor" />
              <path d="M12.500 1h4l-4 4.500h4" fill="none" stroke="#204d8a" strokeWidth="3" /><path d="M12.500 1h4l-4 4.500h4" fill="none" stroke="#eef3fa" strokeWidth="1.300" />
              <path d="M6 7.500h4l-4 4.500h4" fill="none" stroke="#204d8a" strokeWidth="1.300" />
            </svg>
          </TrayItem>
        </Tray>
      </Taskbar>
    </Screen>
  );
}

export default App;
